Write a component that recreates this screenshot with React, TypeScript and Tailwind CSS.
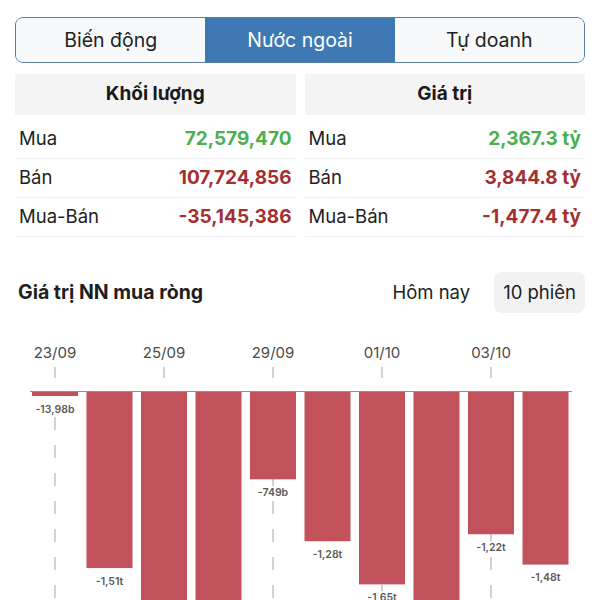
import React from 'react';

const tabs = ['Biến động', 'Nước ngoài', 'Tự doanh'];

const volumeRows = [
  { label: 'Mua', value: '72,579,470', color: 'text-[#4caf50]' },
  { label: 'Bán', value: '107,724,856', color: 'text-[#a3302f]' },
  { label: 'Mua-Bán', value: '-35,145,386', color: 'text-[#a3302f]' },
];

const valueRows = [
  { label: 'Mua', value: '2,367.3 tỷ', color: 'text-[#4caf50]' },
  { label: 'Bán', value: '3,844.8 tỷ', color: 'text-[#a3302f]' },
  { label: 'Mua-Bán', value: '-1,477.4 tỷ', color: 'text-[#a3302f]' },
];

// net buy per session, in nghìn tỷ; labels of the tallest bars fall below the fold
const bars = [
  { v: 0.01398, label: '-13,98b', date: '23/09' },
  { v: 1.51, label: '-1,51t' },
  { v: 2.3, label: '', date: '25/09' },
  { v: 2.3, label: '' },
  { v: 0.749, label: '-749b', date: '29/09' },
  { v: 1.28, label: '-1,28t' },
  { v: 1.65, label: '-1,65t', date: '01/10' },
  { v: 2.3, label: '' },
  { v: 1.22, label: '-1,22t', date: '03/10' },
  { v: 1.48, label: '-1,48t' },
];

const SCALE = 116.6;
const TOP = 392;

function StatTable({ title, rows }: { title: string; rows: typeof volumeRows }) {
  return (
    <div>
      <div className="h-[41px] bg-[#f4f4f4] flex items-center justify-center text-[19px] font-bold text-[#1a1a1a]">
        {title}
      </div>
      <div className="mt-[5px]">
        {rows.map((r) => (
          <div
            key={r.label}
            className="h-[39px] flex items-center justify-between px-[4px] border-b border-[#f0f0f0]"
          >
            <span className="text-[18.5px] text-[#222]">{r.label}</span>
            <span className={`text-[19px] font-bold ${r.color}`}>{r.value}</span>
          </div>
        ))}
      </div>
    </div>
  );
}

function Chart() {
  return (
    <svg width="600" height="287" viewBox="0 313 600 287" className="block -mx-[15px]" fontFamily="Inter, sans-serif">
      {bars.map((b, i) =>
        b.date ? (
          <g key={'g' + i}>
            <text x={55 + i * 54.5} y={358} textAnchor="middle" fontSize="15" fill="#4a4a4a">
              {b.date}
            </text>
            <line x1={55 + i * 54.5} x2={55 + i * 54.5} y1={367} y2={378} stroke="#b5b5b5" strokeWidth="1.2" />
            <line
              x1={55 + i * 54.5}
              x2={55 + i * 54.5}
              y1={417}
              y2={600}
              stroke="#b5b5b5"
              strokeWidth="1.2"
              strokeDasharray="13 15"
            />
          </g>
        ) : null
      )}
      <line x1={30} x2={572} y1={391.5} y2={391.5} stroke="#9a8a8a" strokeWidth="1" />
      {bars.map((b, i) => {
        const h = Math.max(b.v * SCALE, 4);
        const cx = 55 + i * 54.5;
        const ly = TOP + h + 13;
        return (
          <g key={'b' + i}>
            <rect x={cx - 23} y={TOP} width={46} height={h} fill="#c1525c" />
            {b.label ? (
              <>
                <rect x={cx - 20} y={ly - 6} width={40} height={12} fill="#fff" />
                <text
                  x={cx}
                  y={ly}
                  textAnchor="middle"
                  dominantBaseline="central"
                  fontSize="10.5"
                  fontWeight="600"
                  fill="#5a5a5a"
                >
                  {b.label}
                </text>
              </>
            ) : null}
          </g>
        );
      })}
    </svg>
  );
}

export default function App() {
  return (
    <div className="w-[600px] h-[600px] overflow-hidden bg-white px-[15px] pt-[17px] font-['Inter',sans-serif]">
      <div className="grid grid-cols-3 h-[46px] border border-[#5a7ea6] rounded-[8px] overflow-hidden">
        {tabs.map((t, i) => (
          <div
            key={t}
            className={
              i === 1
                ? 'flex items-center justify-center pt-[1px] bg-[#3e79b3] text-white text-[19.5px]'
                : 'flex items-center justify-center pt-[1px] bg-[#f8f9fa] text-[#222] text-[19.5px]'
            }
          >
            {t}
          </div>
        ))}
      </div>

      <div className="mt-[11px] grid grid-cols-2 gap-x-[9px]">
        <StatTable title="Khối lượng" rows={volumeRows} />
        <StatTable title="Giá trị" rows={valueRows} />
      </div>

      <div className="mt-[35px] h-[41px] flex items-center justify-between">
        <span className="pl-[3px] text-[19.5px] font-bold text-[#1f1f1f]">Giá trị NN mua ròng</span>
        <div className="flex items-center gap-[24px]">
          <span className="text-[18.5px] text-[#222]">Hôm nay</span>
          <span className="h-[41px] px-[9px] flex items-center rounded-[8px] bg-[#f2f2f2] text-[18.5px] text-[#222]">
            10 phiên
          </span>
        </div>
      </div>

      <Chart />
    </div>
  );
}
